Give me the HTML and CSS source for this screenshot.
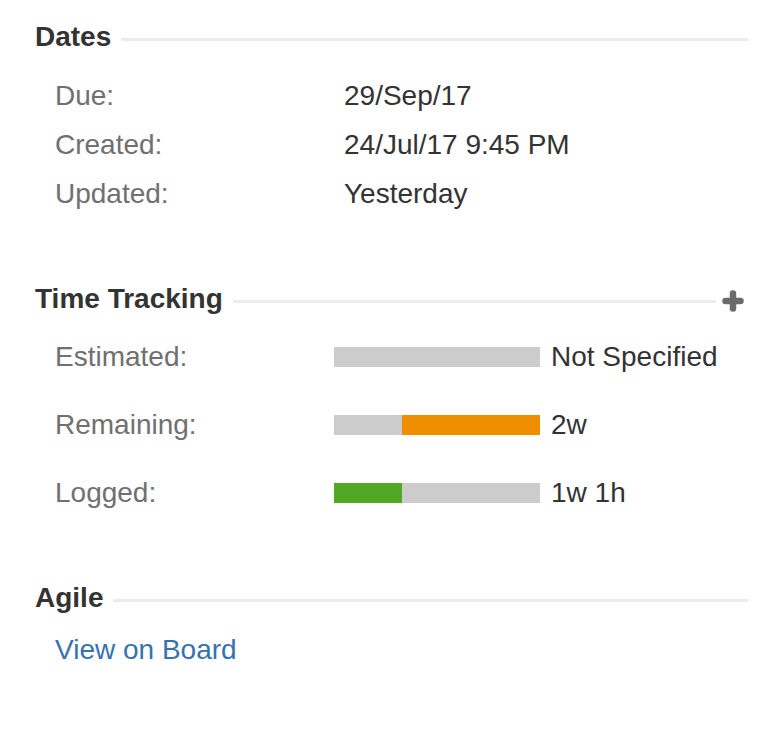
FILE: index.html
```html
<!DOCTYPE html>
<html>
<head>
  <meta charset="utf-8">
  <meta name="viewport" content="width=device-width, initial-scale=1">
  <title>Issue details</title>
  <link rel="stylesheet" href="styles.css">
</head>
<body>
  <div class="sidebar">

    <div class="module dates">
      <div class="mod-header">
        <h2>Dates</h2>
        <span class="rule"></span>
      </div>
      <dl class="dates-list">
        <div class="item"><dt>Due:</dt><dd>29/Sep/17</dd></div>
        <div class="item"><dt>Created:</dt><dd>24/Jul/17 9:45 PM</dd></div>
        <div class="item"><dt>Updated:</dt><dd>Yesterday</dd></div>
      </dl>
    </div>

    <div class="module tracking">
      <div class="mod-header">
        <h2>Time Tracking</h2>
        <span class="rule"></span>
        <a class="add" href="#" title="Log work">
          <svg width="22" height="22" viewBox="0 0 22 22">
            <path d="M11 3.5v15M3.5 11h15" stroke="#6b6b6b" stroke-width="6.5" stroke-linecap="round"/>
          </svg>
        </a>
      </div>
      <div class="tt-row">
        <span class="tt-label">Estimated:</span>
        <div class="bar"><span class="fill grey" style="width: 100%"></span></div>
        <span class="tt-value">Not Specified</span>
      </div>
      <div class="tt-row">
        <span class="tt-label">Remaining:</span>
        <div class="bar"><span class="fill orange" style="margin-left: 33%; width: 67%"></span></div>
        <span class="tt-value">2w</span>
      </div>
      <div class="tt-row">
        <span class="tt-label">Logged:</span>
        <div class="bar"><span class="fill green" style="width: 33%"></span></div>
        <span class="tt-value">1w 1h</span>
      </div>
    </div>

    <div class="module agile">
      <div class="mod-header">
        <h2>Agile</h2>
        <span class="rule"></span>
      </div>
      <a class="board-link" href="#">View on Board</a>
    </div>

  </div>
</body>
</html>
```

FILE: styles.css
```css
body {
  margin: 0;
  background: #fff;
  font-family: "Liberation Sans", Arial, Helvetica, sans-serif;
  font-size: 28px;
  color: #333;
}

.sidebar {
  padding: 20px 20px 0 35px;
}

.mod-header {
  display: flex;
  align-items: center;
  height: 34px;
}

.mod-header h2 {
  margin: 0;
  font-size: 28px;
  font-weight: bold;
  color: #333;
  line-height: 34px;
}

.rule {
  flex: 1;
  height: 3px;
  margin: 4px 0 0 10px;
  background: #ececec;
}

.add {
  display: flex;
  margin: 4px 4px 0 6px;
}

.dates-list {
  margin: 17px 0 0 20px;
}

.item {
  display: flex;
  height: 49px;
  align-items: center;
}

dt {
  width: 289px;
  color: #707070;
}

dd {
  margin: 0;
  color: #333;
}

.tracking {
  margin-top: 64px;
}

.tt-row {
  display: flex;
  align-items: center;
  height: 68px;
  padding-left: 20px;
}

.tracking .mod-header {
  margin-bottom: 7px;
}

.tt-label {
  width: 279px;
  color: #707070;
}

.bar {
  display: flex;
  width: 206px;
  height: 20px;
  background: #ccc;
}

.fill {
  display: block;
  height: 100%;
}

.grey { background: #ccc; }
.orange { background: #ee8e00; }
.green { background: #51a825; }

.tt-value {
  margin-left: 11px;
  color: #333;
}

.agile {
  margin-top: 54px;
}

.board-link {
  display: block;
  margin: 10px 0 0 20px;
  line-height: 49px;
  color: #3572b0;
  text-decoration: none;
}
```
